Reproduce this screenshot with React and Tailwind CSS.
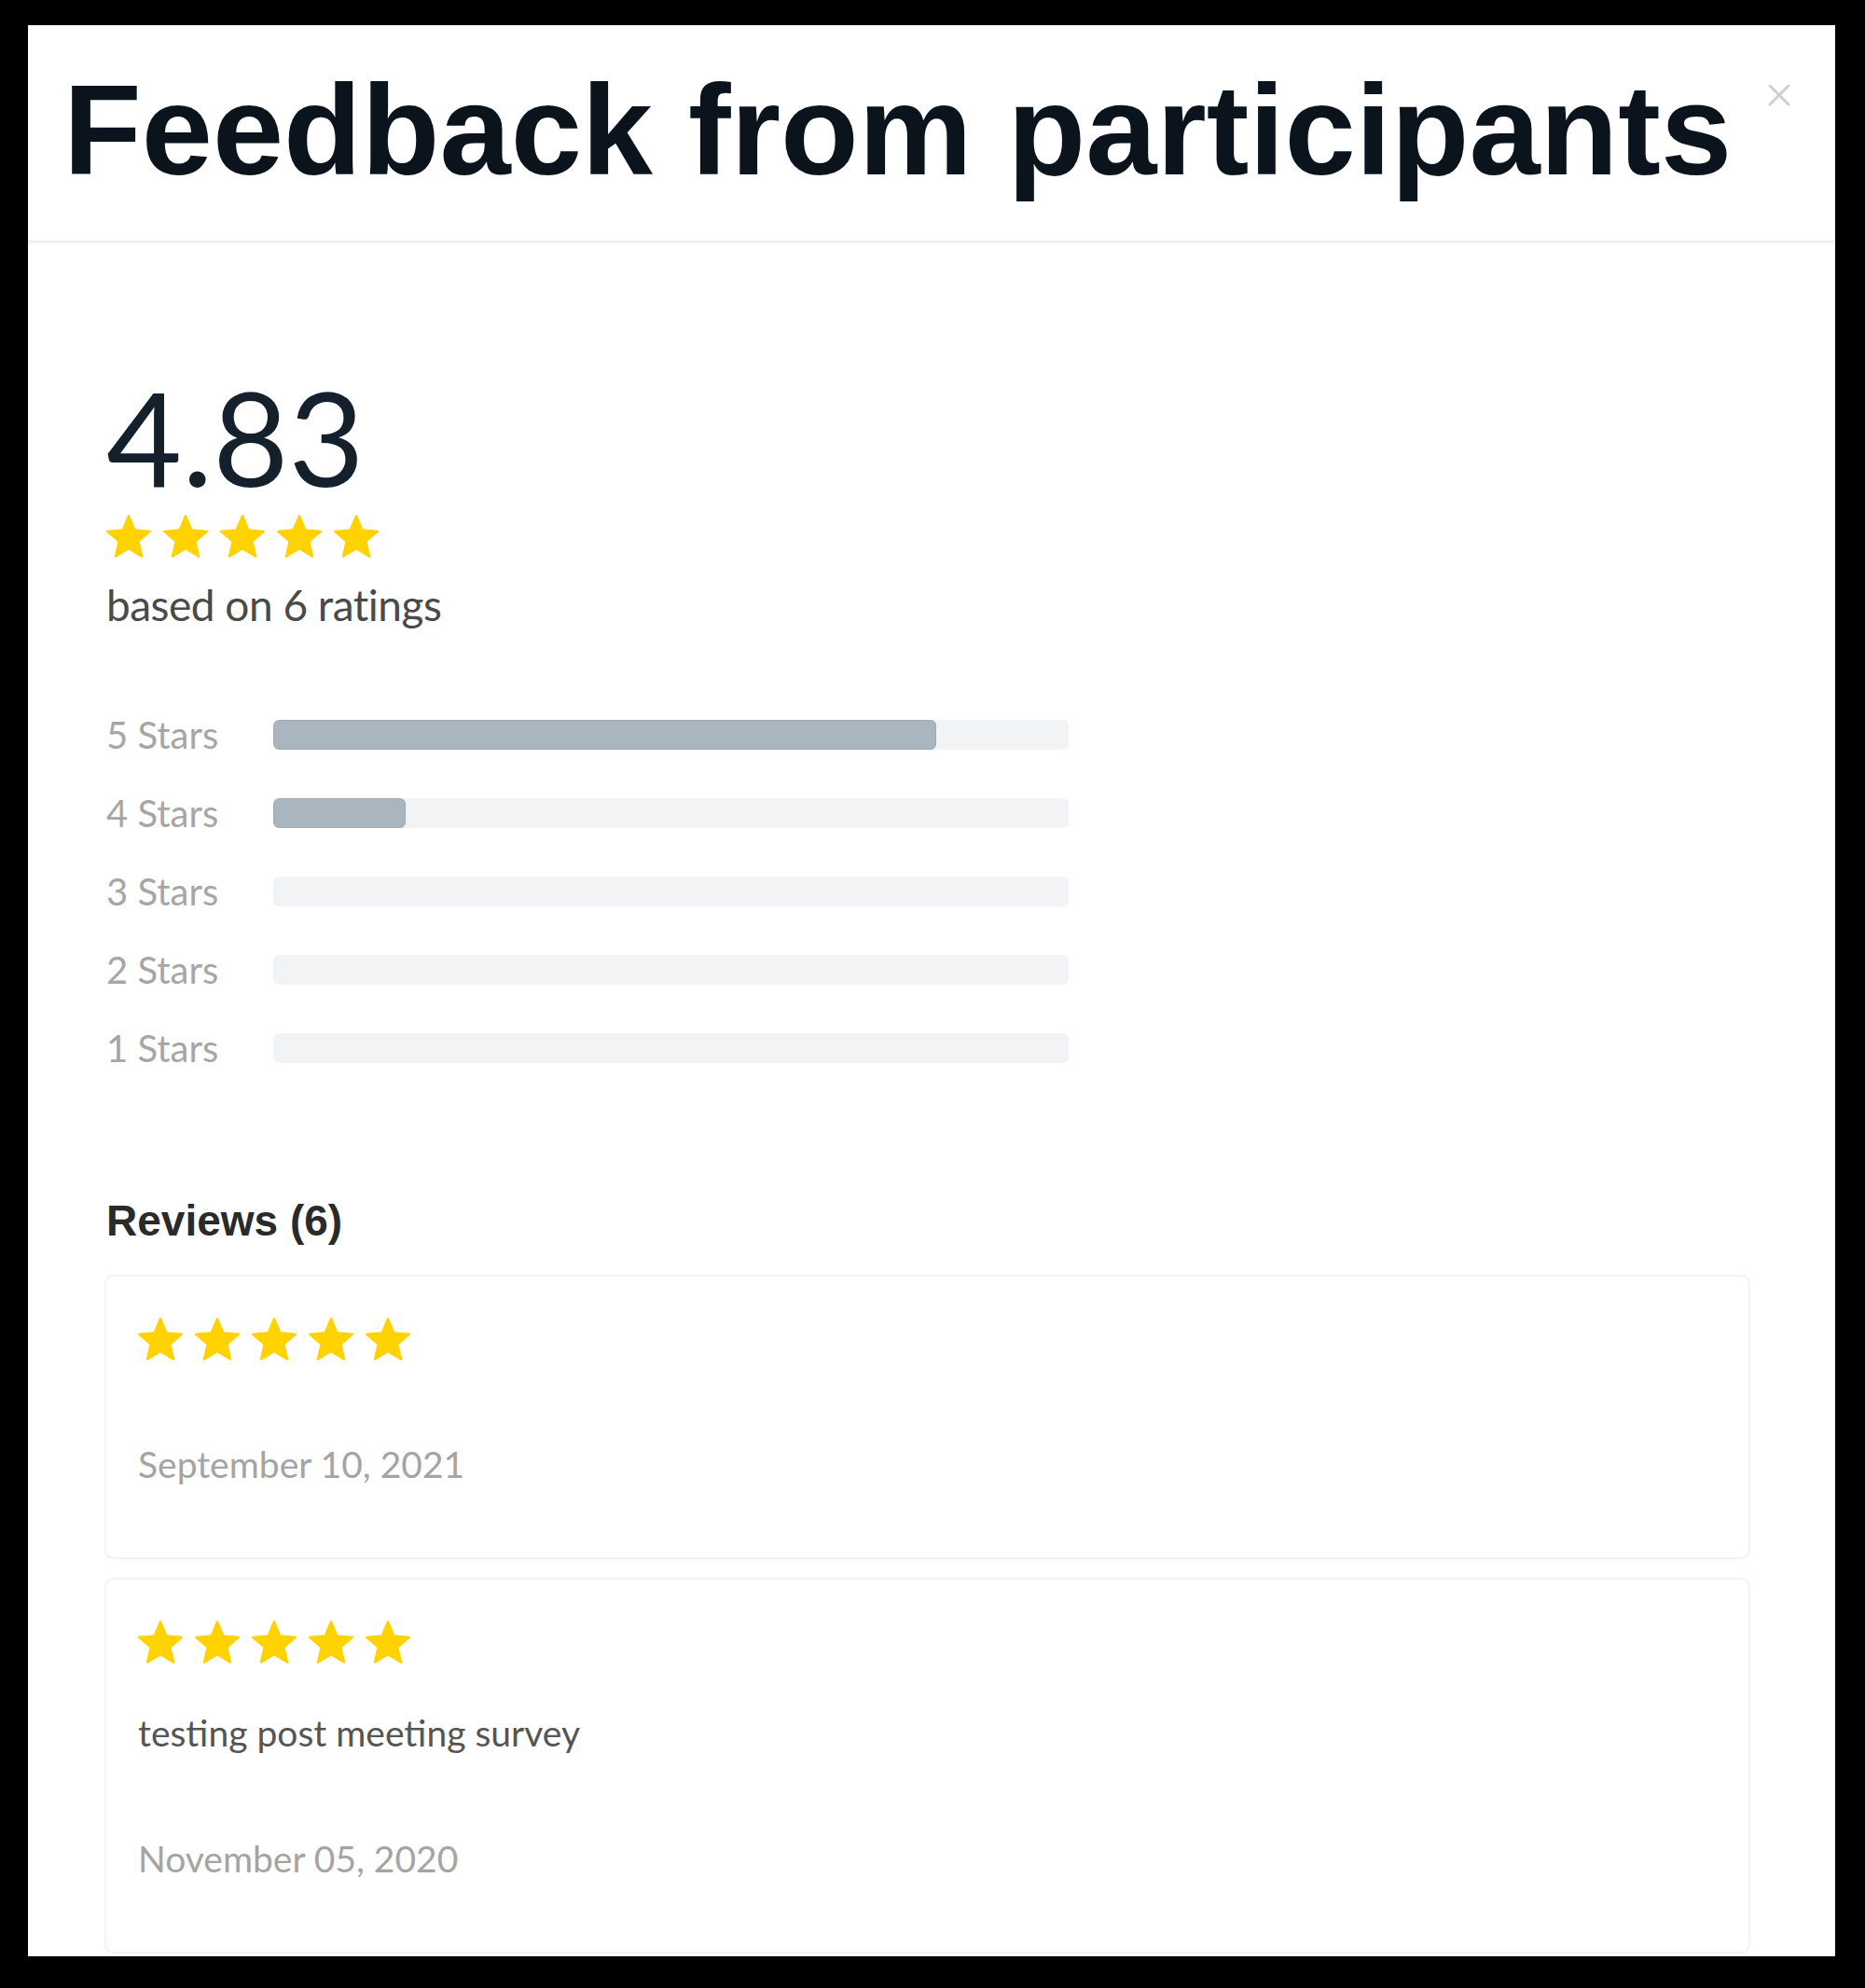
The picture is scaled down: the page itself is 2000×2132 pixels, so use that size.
import React from 'react';

const ratingRows = [
  { label: '5 Stars', count: 5 },
  { label: '4 Stars', count: 1 },
  { label: '3 Stars', count: 0 },
  { label: '2 Stars', count: 0 },
  { label: '1 Stars', count: 0 },
];

const reviews = [
  { id: 1, stars: 5, comment: '', date: 'September 10, 2021' },
  { id: 2, stars: 5, comment: 'testing post meeting survey', date: 'November 05, 2020' },
];

const Star = () => (
  <svg viewBox="1.5 1.5 21 20" className="w-[48px] h-[46px]" aria-hidden="true">
    <path
      d="M12 17.27L18.18 21l-1.64-7.03L22 9.24l-7.19-.61L12 2 9.19 8.63 2 9.24l5.46 4.73L5.82 21z"
      fill="#ffd200"
      stroke="#ffd200"
      strokeWidth="1"
      strokeLinejoin="round"
    />
  </svg>
);

const StarRow = ({ count = 5 }) => (
  <div className="flex items-center gap-[13px]">
    {Array.from({ length: count }).map((_, i) => (
      <Star key={i} />
    ))}
  </div>
);

const RatingBar = ({ label, count, total }) => {
  const pct = total ? (count / total) * 100 : 0;
  return (
    <div className="flex items-center h-[84px]">
      <span className="w-[179px] text-[40px] leading-none text-[#a6a6a6] font-['Lato',sans-serif]">
        {label}
      </span>
      <div className="w-[853px] h-[32px] rounded-[6px] bg-[#f2f3f5] overflow-hidden">
        {pct > 0 && (
          <div className="h-full rounded-[6px] bg-[#a9b6c0] border border-[#9eacb6]" style={{ width: `${pct}%` }} />
        )}
      </div>
    </div>
  );
};

const ReviewCard = ({ review }) => (
  <div className="border-2 border-[#f3f3f3] rounded-[10px] shadow-[0_1px_3px_rgba(0,0,0,0.03)] pl-[34px] pt-[44px] pb-[80px]">
    <StarRow count={review.stars} />
    {review.comment ? (
      <p className="mt-[55px] text-[39px] leading-none text-[#555555] font-['Lato',sans-serif]">{review.comment}</p>
    ) : null}
    <p
      className={`${review.comment ? 'mt-[96px]' : 'mt-[92px]'} text-[39px] leading-none text-[#a4a4a4] font-['Lato',sans-serif]`}
    >
      {review.date}
    </p>
  </div>
);

export default function App() {
  const total = ratingRows.reduce((sum, r) => sum + r.count, 0);

  return (
    <div className="w-[2000px] h-[2132px] bg-black pt-[27px] pl-[30px] pr-[32px] pb-[34px]">
      <div className="w-full h-full bg-white overflow-hidden">
        {/* header */}
        <div className="relative h-[233px] border-b-2 border-[#ededed] shadow-[0_2px_3px_rgba(0,0,0,0.03)] pl-[38px] pt-[44px]">
          <h1 className="text-[137px] leading-none font-bold text-[#0b141d] font-['Liberation_Sans',Arial,sans-serif]">
            Feedback from participants
          </h1>
          <button className="absolute right-[45px] top-[60px] w-[30px] h-[30px]" aria-label="Close">
            <svg viewBox="0 0 30 30" className="w-[30px] h-[30px]">
              <path d="M5 5 L25 25 M25 5 L5 25" stroke="#cfcfcf" strokeWidth="3" strokeLinecap="round" />
            </svg>
          </button>
        </div>

        {/* body */}
        <div className="pl-[82px] pr-[91px]">
          <div className="pl-[2px]">
            <div className="mt-[138px] text-[140px] leading-none text-[#14202b] font-['Lato',sans-serif]">4.83</div>
            <div className="mt-[14px]">
              <StarRow count={5} />
            </div>
            <div className="mt-[28px] text-[46px] leading-none text-[#4a4a4a] font-['Lato',sans-serif] tracking-[-0.5px]">
              based on 6 ratings
            </div>

            <div className="mt-[74px]">
              {ratingRows.map((row) => (
                <RatingBar key={row.label} label={row.label} count={row.count} total={total} />
              ))}
            </div>

            <h2 className="mt-[120px] text-[46px] leading-none font-bold text-[#2a2a2a] font-['Liberation_Sans',Arial,sans-serif]">
              Reviews (6)
            </h2>
          </div>

          <div className="mt-[35px] flex flex-col gap-[20px]">
            {reviews.map((review) => (
              <ReviewCard key={review.id} review={review} />
            ))}
          </div>
        </div>
      </div>
    </div>
  );
}
